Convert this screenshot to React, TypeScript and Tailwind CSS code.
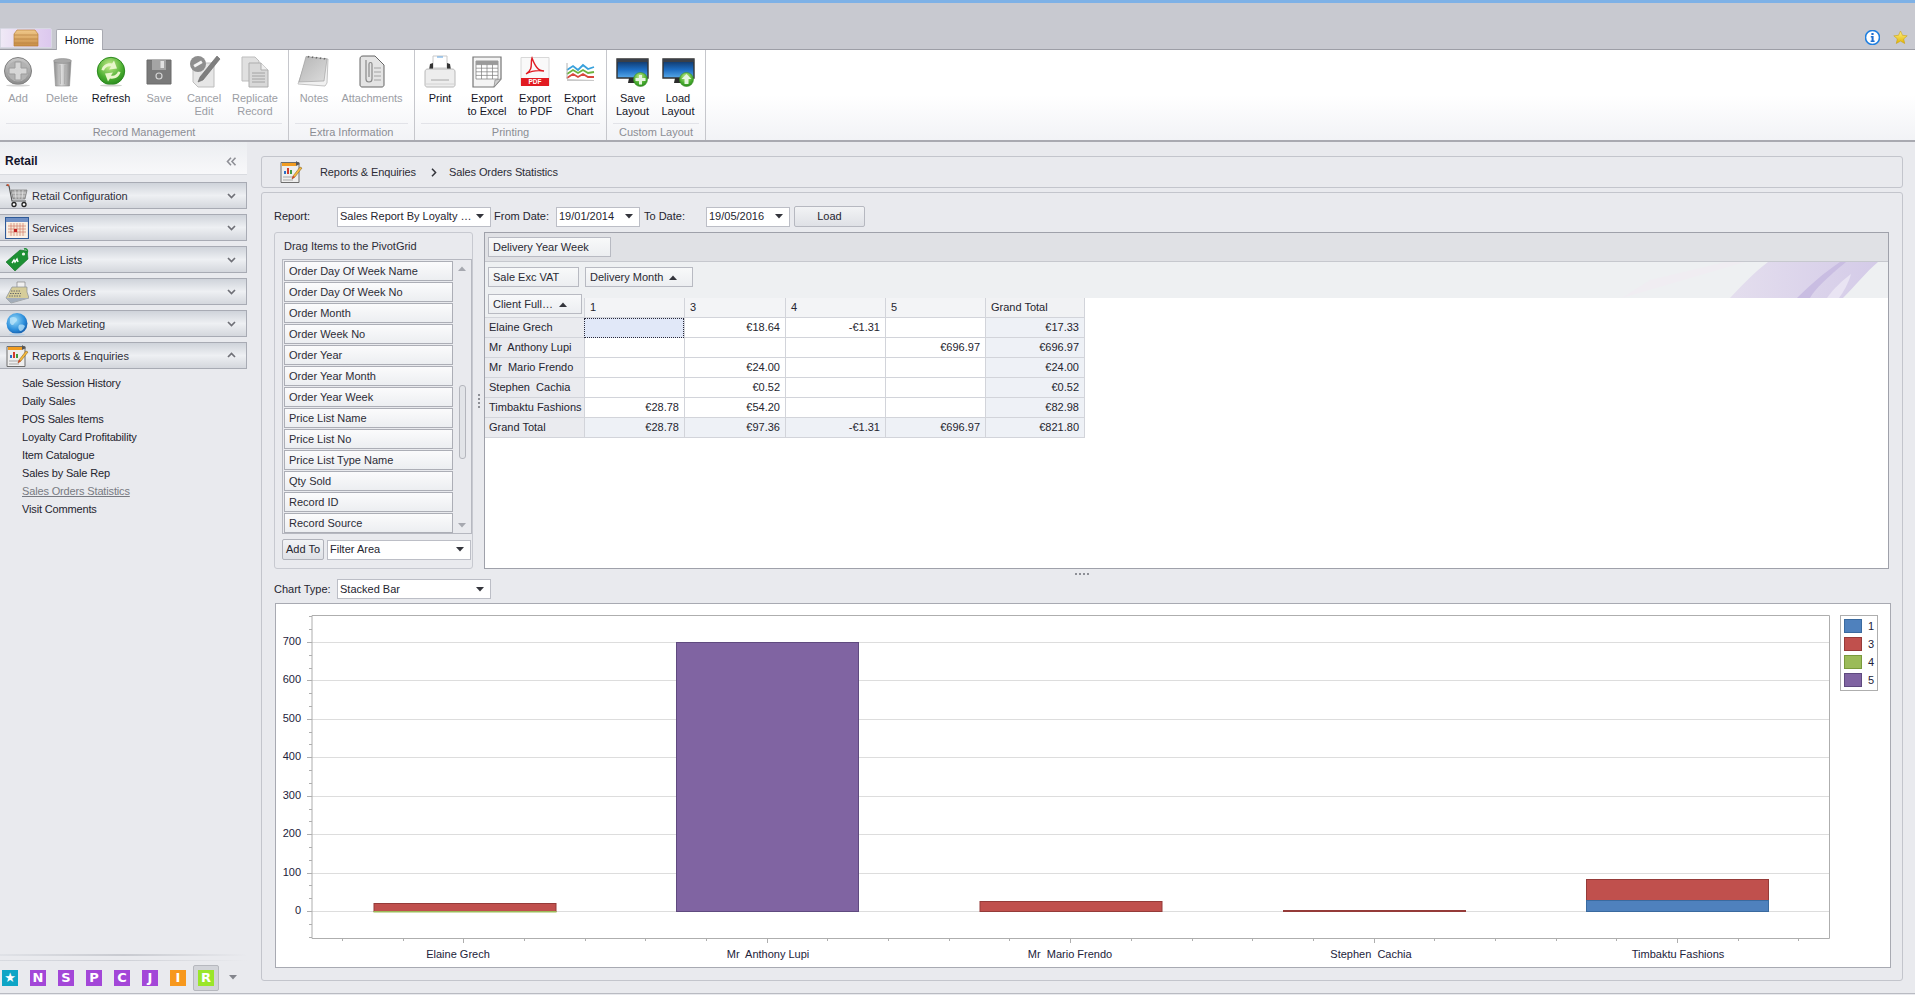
import React from "react";

const Defs = () => (
  <svg width="0" height="0" className="absolute">
    <defs>
      <linearGradient id="gGrey" x1="0" y1="0" x2="0" y2="1"><stop offset="0" stopColor="#c9c9c9" /><stop offset="1" stopColor="#8b8b8b" /></linearGradient>
      <linearGradient id="gPad" x1="0" y1="0" x2="1" y2="1"><stop offset="0" stopColor="#b5b5b5" /><stop offset="1" stopColor="#dcdcdc" /></linearGradient>
      <linearGradient id="gCyl" x1="0" y1="0" x2="1" y2="0"><stop offset="0" stopColor="#8d8d8d" /><stop offset=".45" stopColor="#dcdcdc" /><stop offset="1" stopColor="#858585" /></linearGradient>
      <radialGradient id="gGreen" cx=".45" cy=".3" r=".8"><stop offset="0" stopColor="#c6ec8c" /><stop offset=".6" stopColor="#49ad2f" /><stop offset="1" stopColor="#1d7d18" /></radialGradient>
      <linearGradient id="gScreen" x1="0" y1="0" x2="0" y2="1"><stop offset="0" stopColor="#0f2c55" /><stop offset=".55" stopColor="#1c6bc0" /><stop offset="1" stopColor="#57a9ea" /></linearGradient>
      <radialGradient id="gGlobe" cx=".4" cy=".35" r=".75"><stop offset="0" stopColor="#9bdcf8" /><stop offset=".6" stopColor="#2d8fdc" /><stop offset="1" stopColor="#0e4f9e" /></radialGradient>
      <linearGradient id="gWood" x1="0" y1="0" x2="0" y2="1"><stop offset="0" stopColor="#f0c98b" /><stop offset="1" stopColor="#c98d45" /></linearGradient>
      <linearGradient id="gStar" x1="0" y1="0" x2="0" y2="1"><stop offset="0" stopColor="#fff38a" /><stop offset="1" stopColor="#e2b400" /></linearGradient>
      <linearGradient id="gSwoosh" x1="0" y1="0" x2="1" y2="0"><stop offset="0" stopColor="#e4deee" /><stop offset="1" stopColor="#d4cbe8" /></linearGradient>
    </defs>
  </svg>
);

const AddIcon = () => (
  <svg width="32" height="33" viewBox="0 0 32 33">
    <circle cx="16" cy="16" r="13.5" fill="url(#gGrey)" stroke="#7f7f7f" />
    <circle cx="16" cy="16" r="10.5" fill="#b2b2b2" />
    <path d="M13 7h6v6h6v6h-6v6h-6v-6H7v-6h6z" fill="#d6d6d6" stroke="#9c9c9c" />
    <ellipse cx="16" cy="30.5" rx="12" ry="1" fill="#d5d5d5" />
  </svg>
);
const TrashIcon = () => (
  <svg width="32" height="33" viewBox="0 0 32 33">
    <path d="M8 7h17l-1.5 24h-14z" fill="url(#gCyl)" stroke="#8d8d8d" strokeWidth=".6" />
    <ellipse cx="16.5" cy="6" rx="9" ry="2.4" fill="#a8a8a8" stroke="#8a8a8a" strokeWidth=".6" />
    <path d="M14 10l.4 19M19 10l-.4 19" stroke="#9a9a9a" strokeWidth=".6" />
  </svg>
);
const RefreshIcon = () => (
  <svg width="32" height="33" viewBox="0 0 32 33">
    <circle cx="16" cy="16" r="13.7" fill="url(#gGreen)" stroke="#2c8a20" />
    <path d="M6.5 15c1-5 6-7.5 10.5-6.5l2-3 3 8-8 1 2-3c-3-.8-6 1-7 4z" fill="#e8f6cc" />
    <path d="M25.5 17c-1 5-6 7.5-10.5 6.5l-2 3-3-8 8-1-2 3c3 .8 6-1 7-4z" fill="#e8f6cc" />
    <ellipse cx="16" cy="30.5" rx="11" ry="1" fill="#cfd3cc" />
  </svg>
);
const SaveIcon = () => (
  <svg width="32" height="33" viewBox="0 0 32 33">
    <path d="M4 5h24v24H4z" fill="#7a7a7a" stroke="#6a6a6a" />
    <path d="M9 5h14v10H9z" fill="#a4a4a4" />
    <path d="M17.5 6h3.5v7h-3.5z" fill="#e2e2e2" />
    <circle cx="16" cy="21" r="3" fill="none" stroke="#d4d4d4" strokeWidth="1.2" />
  </svg>
);
const CancelEditIcon = () => (
  <svg width="34" height="33" viewBox="0 0 34 33">
    <path d="M6 8h21v24H11l-5-5z" fill="#e6e6e6" stroke="#bdbdbd" />
    <circle cx="11" cy="9" r="8" fill="#8e8e8e" />
    <path d="M6.5 9h9" stroke="#f3f3f3" strokeWidth="3" transform="rotate(-30 11 9)" />
    <path d="M30 1l3 3-17 21-5 2 2-5z" fill="#7f7f7f" stroke="#666" strokeWidth=".6" />
  </svg>
);
const ReplicateIcon = () => (
  <svg width="32" height="33" viewBox="0 0 32 33">
    <path d="M3 2h13l4 4v20H3z" fill="#e0e0e0" stroke="#bdbdbd" />
    <path d="M10 8h12l7 7v17H10z" fill="#d8d8d8" stroke="#adadad" />
    <path d="M22 8v7h7" fill="#eeeeee" stroke="#adadad" />
    <path d="M13 18h13M13 21h13M13 24h13M13 27h13" stroke="#989898" strokeWidth=".8" />
  </svg>
);
const NotesIcon = () => (
  <svg width="34" height="33" viewBox="0 0 34 33">
    <path d="M10 2l21 2-1 24-2 3-27-2z" fill="#f1f1f1" stroke="#c4c4c4" />
    <path d="M9 1.5l21 2.5-3 22-25 1z" fill="url(#gPad)" stroke="#9b9b9b" strokeWidth=".6" />
    <path d="M11 2.5l1-1.5M15 3l1-1.5M19 3.5l1-1.5M23 4l1-1.5M27 4.5l1-1.5" stroke="#666" strokeWidth="1.3" />
  </svg>
);
const AttachIcon = () => (
  <svg width="32" height="33" viewBox="0 0 32 33">
    <path d="M4 4c0-2 1-3 3-3h12l9 9v20c0 1-1 2-2 2H6c-1 0-2-1-2-2z" fill="#e4e4e4" stroke="#555" strokeWidth=".9" />
    <path d="M10 5v19c0 4 6 4 6 0V9c0-2-3-2-3 0v13" fill="none" stroke="#8a8a8a" strokeWidth="1.2" />
    <path d="M18 13h7M18 17h7M18 21h7M18 25h7" stroke="#8a8a8a" strokeWidth=".7" />
  </svg>
);
const PrintIcon = () => (
  <svg width="34" height="33" viewBox="0 0 34 33">
    <path d="M10 1h14v12H10z" fill="#fff" stroke="#c8c8c8" />
    <path d="M14 2h6" stroke="#5aa0e0" strokeWidth="1" />
    <path d="M7 9l3-1v6h14V8l3 1 1 6H6z" fill="#333" />
    <path d="M2 17c0-2 1-3 3-3h24c2 0 3 1 3 3v13c0 1-1 2-2 2H4c-1 0-2-1-2-2z" fill="#ededed" stroke="#b8b8b8" />
    <path d="M8 25h18" stroke="#a6a6a6" strokeWidth="1" />
    <path d="M2 29h30" stroke="#d2d2d2" />
  </svg>
);
const ExcelIcon = () => (
  <svg width="32" height="33" viewBox="0 0 32 33">
    <path d="M2 2h28v22l-7 8H2z" fill="#f4f4f4" stroke="#767676" strokeWidth="1.2" />
    <path d="M5 6h22v18H5z" fill="#fff" stroke="#777" strokeWidth=".7" />
    <path d="M5 9.6h22M5 13.2h22M5 16.8h22M5 20.4h22M10.5 6v18M16 6v18M21.5 6v18" stroke="#7d7d7d" strokeWidth=".7" />
    <path d="M5 6h22v3.6H5z" fill="#9a9a9a" />
    <path d="M23 32l1-7 6-1z" fill="#cfcfcf" stroke="#888" strokeWidth=".7" />
  </svg>
);
const PdfIcon = () => (
  <svg width="32" height="33" viewBox="0 0 32 33">
    <path d="M2 2.5h28v28H2z" fill="#f9f9f9" stroke="#d8d8d8" />
    <path d="M2 23h28v8H2z" fill="#e11b22" />
    <path d="M13 3c-2 5 2 11-6 16 5-3 11-4 18-3-6 0-9-5-12-13z" fill="none" stroke="#e11b22" strokeWidth="1.4" />
    <text x="16" y="29.4" textAnchor="middle" fontSize="6.5" fontWeight="700" fill="#fff" fontFamily="Liberation Sans">PDF</text>
  </svg>
);
const ChartIcon = () => (
  <svg width="32" height="33" viewBox="0 0 32 33">
    <path d="M3 24l27 1v1H3z" fill="#c8c8c8" />
    <path d="M3 15l6-4 5 4 5-5 5 4 6-2" fill="none" stroke="#38a1dc" strokeWidth="1.8" />
    <path d="M3 19l6-4 5 3 5-3 5 3 6-1" fill="none" stroke="#6cb33f" strokeWidth="1.8" />
    <path d="M3 23l6-4 5 3 5-3 5 3 6 0" fill="none" stroke="#d9473d" strokeWidth="1.8" />
    <path d="M3 8v16" stroke="#b4b4b4" />
  </svg>
);
const MonitorIcon = ({ up }: { up?: boolean }) => (
  <svg width="33" height="33" viewBox="0 0 33 33">
    <path d="M1 4h31v19H1z" fill="url(#gScreen)" stroke="#333" strokeWidth="1.4" />
    <path d="M1 4h31v3H1z" fill="#3a3f48" />
    <path d="M13 23h7l1 5h-9z" fill="#2c2c2c" />
    <circle cx="24.5" cy="24.5" r="7" fill="url(#gGreen)" stroke="#3a8d27" strokeWidth=".6" />
    {up ? <path d="M24.5 19l5 5h-3v5h-4v-5h-3z" fill="#e6f5e0" /> : <path d="M23 20h3v3h3.5v3H26v3.5h-3V26h-3.5v-3H23z" fill="#e6f5e0" />}
  </svg>
);

const CartIcon = () => (
  <svg width="24" height="24" viewBox="0 0 24 24">
    <path d="M1 1l3 1 3 15h14" fill="none" stroke="#555" strokeWidth="1.2" />
    <path d="M2 .5l2 1" stroke="#d4502a" strokeWidth="1.4" />
    <path d="M6 6h16l-2 9H8z" fill="#a9a9a9" stroke="#727272" strokeWidth=".7" />
    <path d="M10 6l1 9M14 6v9M18 6l-1 9M7 9h14M8 12h12" stroke="#e6e6e6" strokeWidth=".7" />
    <circle cx="9" cy="20.5" r="2" fill="#fff" stroke="#222" strokeWidth="1.3" />
    <circle cx="19" cy="20.5" r="2" fill="#fff" stroke="#222" strokeWidth="1.3" />
  </svg>
);
const CalendarIcon = () => (
  <svg width="24" height="24" viewBox="0 0 24 24">
    <path d="M.5 1.5h23v21H.5z" fill="#fdf2e8" stroke="#2f5a98" strokeWidth="1.2" />
    <path d="M1 2h22v4H1z" fill="#6f8fc4" />
    <path d="M3 7h18v13H3z" fill="#f7ead9" />
    <path d="M3 10h18M3 13h18M3 16h18M6 7v13M9 7v13M12 7v13M15 7v13M18 7v13" stroke="#cf6d5c" strokeWidth=".6" />
    <path d="M9 13h3v3H9z" fill="#c32222" />
  </svg>
);
const TagIcon = () => (
  <svg width="24" height="24" viewBox="0 0 24 24">
    <path d="M15 2l7 1 1 8-13 12L1 14z" fill="#1c9033" stroke="#0d6c22" strokeWidth=".6" />
    <circle cx="18.5" cy="6" r="1.6" fill="#eaf6ea" />
    <path d="M19 1c3-1 5 2 2 5" fill="none" stroke="#1c9033" strokeWidth="1.4" />
    <path d="M7 15l2-3 1 2 2-3 1 3" fill="none" stroke="#fff" strokeWidth="1.4" />
  </svg>
);
const RegisterIcon = () => (
  <svg width="24" height="24" viewBox="0 0 24 24">
    <path d="M12 2h8v6h-8z" fill="#f0f0f0" stroke="#777" strokeWidth=".6" />
    <path d="M7 7h15v5l2 6-18 5L1 18z" fill="#d6cd9a" stroke="#8a8f96" strokeWidth=".7" />
    <path d="M1 18h23l-18 5z" fill="#a3adba" />
    <path d="M6 11h10M5 13.5h11M4 16h12" stroke="#6a6a6a" strokeWidth="1" strokeDasharray="1.5 1" />
  </svg>
);
const GlobeIcon = () => (
  <svg width="24" height="24" viewBox="0 0 24 24">
    <circle cx="12" cy="11.5" r="10.5" fill="url(#gGlobe)" />
    <path d="M5 6c3-2 6-1 7 1s-2 3-3 5-3 1-4-1zM14 13c3-1 5 0 6 1-1 3-3 5-5 5-2-2-2-4-1-6z" fill="#bfe6fa" opacity=".75" />
    <ellipse cx="12" cy="22.5" rx="8" ry="1.2" fill="#b6cfe6" />
  </svg>
);
const ReportIcon = () => (
  <svg width="24" height="24" viewBox="0 0 24 24">
    <path d="M2 2.5h18v20H2z" fill="#eeeeee" stroke="#6d6d6d" />
    <path d="M3 3h14v3H3z" fill="#f19c21" />
    <path d="M17 1l4 3-4 2z" fill="#555" />
    <path d="M5 14h2v-3H5z" fill="#2d6fc6" />
    <path d="M8 14h2V8H8z" fill="#d23d2d" />
    <path d="M11 14h2v-4h-2z" fill="#3f9b3f" />
    <path d="M4 17h10M4 20h10" stroke="#a8a8a8" />
    <path d="M23 8l-7 9-3 2 1-3 7-9z" fill="#f6b93b" stroke="#7a5b1b" strokeWidth=".5" />
    <path d="M13 19l1-3 2 1z" fill="#d3372a" />
  </svg>
);

type RI = { label: string[]; w: number; icon: React.ReactNode; on?: boolean };

const RibbonItem = ({ label, w, icon, on }: RI) => (
  <div style={{ width: w }} className="flex flex-col items-center shrink-0">
    <div className="h-[35px] mt-[4px] flex items-center justify-center">{icon}</div>
    <div className={`mt-[3px] text-center leading-[13px] ${on ? "text-[#14141f]" : "text-[#9b9da4]"}`}>
      {label.map((l) => (
        <div key={l} className="whitespace-nowrap">{l}</div>
      ))}
    </div>
  </div>
);

const RibbonGroup = ({ title, w, items }: { title: string; w: number; items: RI[] }) => (
  <div style={{ width: w }} className="h-full shrink-0 border-r border-[#c6c7cc] flex flex-col">
    <div className="flex h-[73px]">
      {items.map((i) => (
        <RibbonItem key={i.label.join()} {...i} />
      ))}
    </div>
    <div className="mx-[6px] h-px bg-[#e2e3e8]" />
    <div className="text-center text-[#8b8d94] leading-[16px]">{title}</div>
  </div>
);

const navItems: [string, React.ReactNode, boolean][] = [
  ["Retail Configuration", <CartIcon />, false],
  ["Services", <CalendarIcon />, false],
  ["Price Lists", <TagIcon />, false],
  ["Sales Orders", <RegisterIcon />, false],
  ["Web Marketing", <GlobeIcon />, false],
  ["Reports & Enquiries", <ReportIcon />, true],
];

const subItems = ["Sale Session History", "Daily Sales", "POS Sales Items", "Loyalty Card Profitability", "Item Catalogue", "Sales by Sale Rep", "Sales Orders Statistics", "Visit Comments"];

const Chevron = ({ up }: { up?: boolean }) => (
  <svg width="9" height="7" viewBox="0 0 9 7">
    <path d={up ? "M1 5l3.5-3.5L8 5" : "M1 2l3.5 3.5L8 2"} fill="none" stroke="#6f7077" strokeWidth="1.7" />
  </svg>
);

const Arrow = ({ up, color = "#33343b" }: { up?: boolean; color?: string }) => (
  <svg width="8" height="5" viewBox="0 0 8 5" className="shrink-0">
    <path d={up ? "M0 5l4-4.5L8 5z" : "M0 0l4 4.5L8 0z"} fill={color} />
  </svg>
);

const Combo = ({ text, w }: { text: string; w: string }) => (
  <div className={`${w} h-[20px] shrink-0 bg-white border border-[#bcbec6] flex items-center justify-between pl-[2px] pr-[6px]`}>
    <span className="whitespace-nowrap">{text}</span>
    <Arrow />
  </div>
);

const FieldBtn = ({ text, w, sort }: { text: string; w: string; sort?: boolean }) => (
  <div className={`${w} h-[20px] shrink-0 border border-[#b8bac2] bg-gradient-to-b from-[#f8f9fa] to-[#eceef1] flex items-center gap-[6px] pl-[4px] text-[#2a2a33]`}>
    <span className="whitespace-nowrap">{text}</span>
    {sort && <Arrow up />}
  </div>
);

const fields = ["Order Day Of Week Name", "Order Day Of Week No", "Order Month", "Order Week No", "Order Year", "Order Year Month", "Order Year Week", "Price List Name", "Price List No", "Price List Type Name", "Qty Sold", "Record ID", "Record Source"];

const rows: [string, string, string, string, string, string][] = [
  ["Elaine Grech", "", "€18.64", "-€1.31", "", "€17.33"],
  ["Mr  Anthony Lupi", "", "", "", "€696.97", "€696.97"],
  ["Mr  Mario Frendo", "", "€24.00", "", "", "€24.00"],
  ["Stephen  Cachia", "", "€0.52", "", "", "€0.52"],
  ["Timbaktu Fashions", "€28.78", "€54.20", "", "", "€82.98"],
  ["Grand Total", "€28.78", "€97.36", "-€1.31", "€696.97", "€821.80"],
];

const Dots = ({ v }: { v?: boolean }) => (
  <div className={`${v ? "w-[2px] h-[14px] border-l-2" : "h-[2px] w-[14px] border-t-2"} border-dotted border-[#8d8f96]`} />
);

const tiles: [string, string][] = [["★", "#0ea5c6"], ["N", "#a347d8"], ["S", "#a347d8"], ["P", "#a347d8"], ["C", "#a347d8"], ["J", "#a347d8"], ["I", "#f7981d"], ["R", "#9ae62a"]];

const C = { blue: ["#4f81bd", "#3a6a9f"], red: ["#c0504d", "#953b39"], green: ["#9bbb59", "#7a9a3c"], purple: ["#8064a2", "#5f4a7f"] };

const Chart = () => {
  const grid = [0, 100, 200, 300, 400, 500, 600, 700];
  const yOf = (v: number) => 910 - v * 0.3843;
  const yTicks: { y: number; major: boolean }[] = [];
  for (let k = -2; k <= 23; k++) yTicks.push({ y: 910 - k * 12.81, major: k % 3 === 0 });
  const xTicks: { x: number; major: boolean }[] = [];
  for (let k = 0; k < 25; k++) xTicks.push({ x: 342 + k * 60.68, major: k % 5 === 2 });
  const cats: [string, number][] = [["Elaine Grech", 458], ["Mr  Anthony Lupi", 768], ["Mr  Mario Frendo", 1070], ["Stephen  Cachia", 1371], ["Timbaktu Fashions", 1678]];
  const bars: [number, number, number, string[]][] = [
    [373.5, 902, 8, C.red],
    [676, 641, 269, C.purple],
    [979.5, 900, 10, C.red],
    [1283, 909, 1, C.red],
    [1586, 878, 21, C.red],
    [1586, 899, 11, C.blue],
  ];
  const legend: [string, string[]][] = [["1", C.blue], ["3", C.red], ["4", C.green], ["5", C.purple]];
  return (
    <svg width="1614" height="363" viewBox="276 603 1614 363" className="block" fontFamily="Liberation Sans" fontSize="11" fill="#22223a">
      {grid.map((g) => (
        <g key={g}>
          <path d={`M312 ${Math.round(yOf(g)) + 0.5}H1829`} stroke="#dddddd" />
          <text x="301" y={yOf(g) + 3} textAnchor="end">{g}</text>
        </g>
      ))}
      {bars.map(([x, y, h, c], i) => (
        <rect key={i} x={x + 0.5} y={y + 0.5} width="182" height={h} fill={c[0]} stroke={c[1]} strokeWidth="1" />
      ))}
      <rect x="373.5" y="910" width="183" height="1.5" fill={C.green[0]} />
      <path d="M312 614.5H1829.5V937.5H312z" fill="none" stroke="#aeaeae" />
      {yTicks.map((t, i) => (
        <path key={i} d={`M${t.major ? 307 : 309} ${Math.round(t.y) + 0.5}H312`} stroke="#aeaeae" />
      ))}
      {xTicks.map((t, i) => (
        <path key={i} d={`M${Math.round(t.x) + 0.5} 937V${t.major ? 942 : 940}`} stroke="#aeaeae" />
      ))}
      {cats.map(([c, x]) => (
        <text key={c} x={x} y="956.5" textAnchor="middle" style={{ whiteSpace: "pre" }}>{c}</text>
      ))}
      <rect x="1840.5" y="614.5" width="37" height="75" fill="#fff" stroke="#aeaeae" />
      {legend.map(([l, c], i) => (
        <g key={l}>
          <rect x="1844.5" y={618.5 + i * 18} width="17" height="13" fill={c[0]} stroke={c[1]} />
          <text x="1868" y={629 + i * 18}>{l}</text>
        </g>
      ))}
    </svg>
  );
};

export default function App() {
  return (
    <div className="w-[1915px] h-[995px] overflow-hidden flex flex-col bg-[#e9eaee] text-[11px] leading-[13px] text-[#25252f] font-['Liberation_Sans',sans-serif]">
      <Defs />
      <div className="h-[3px] shrink-0 bg-[#7eb1e6]" />
      {/* title strip */}
      <div className="h-[47px] shrink-0 bg-[#c8c9d0] border-b border-[#9d9ea6] flex items-end relative">
        <div className="w-[52px] h-[20px] mb-[1px] border border-[#d8d8e4] bg-gradient-to-r from-[#efe9f6] via-[#e6d6f1] to-[#dcc8ee] flex items-center justify-center rounded-tr-[2px]">
          <svg width="28" height="18" viewBox="0 0 28 18">
            <path d="M2 5l3-4h18l3 4v12H2z" fill="url(#gWood)" stroke="#b98339" strokeWidth=".7" />
            <path d="M2 6h24M2 10h24M2 14h24" stroke="#b4803f" strokeWidth=".7" />
          </svg>
        </div>
        <div className="ml-[4px] w-[47px] h-[21px] -mb-px bg-white border border-b-0 border-[#a9aab2] rounded-t-[2px] flex items-center justify-center text-[#14141f]">Home</div>
        <div className="ml-auto flex items-center gap-[13px] mr-[7px] mb-[4px]">
          <svg width="15" height="15" viewBox="0 0 15 15">
            <circle cx="7.5" cy="7.5" r="7" fill="#fff" stroke="#1f7fe0" strokeWidth="1.6" />
            <path d="M6.4 3h2.2v2H6.4zM5.8 6h2.8v4.6h1V12H5.6v-1.4h1V7.4h-.8z" fill="#1f6fd0" />
          </svg>
          <svg width="15" height="15" viewBox="0 0 15 15">
            <path d="M7.5 1l2 4.3 4.7.5-3.5 3.1 1 4.6-4.2-2.4-4.2 2.4 1-4.6L.8 5.8l4.7-.5z" fill="url(#gStar)" stroke="#c89b00" strokeWidth=".5" />
          </svg>
        </div>
      </div>
      {/* ribbon */}
      <div className="h-[92px] shrink-0 flex border-b-2 border-[#a9aab1] bg-gradient-to-b from-white via-white to-[#f2f3f6]">
        <RibbonGroup title="Record Management" w={289} items={[
          { label: ["Add"], w: 36, icon: <AddIcon /> },
          { label: ["Delete"], w: 52, icon: <TrashIcon /> },
          { label: ["Refresh"], w: 46, icon: <RefreshIcon />, on: true },
          { label: ["Save"], w: 50, icon: <SaveIcon /> },
          { label: ["Cancel", "Edit"], w: 40, icon: <CancelEditIcon /> },
          { label: ["Replicate", "Record"], w: 62, icon: <ReplicateIcon /> },
        ]} />
        <RibbonGroup title="Extra Information" w={126} items={[
          { label: ["Notes"], w: 50, icon: <NotesIcon /> },
          { label: ["Attachments"], w: 66, icon: <AttachIcon /> },
        ]} />
        <RibbonGroup title="Printing" w={192} items={[
          { label: ["Print"], w: 50, icon: <PrintIcon />, on: true },
          { label: ["Export", "to Excel"], w: 44, icon: <ExcelIcon />, on: true },
          { label: ["Export", "to PDF"], w: 52, icon: <PdfIcon />, on: true },
          { label: ["Export", "Chart"], w: 38, icon: <ChartIcon />, on: true },
        ]} />
        <RibbonGroup title="Custom Layout" w={99} items={[
          { label: ["Save", "Layout"], w: 51, icon: <MonitorIcon />, on: true },
          { label: ["Load", "Layout"], w: 40, icon: <MonitorIcon up />, on: true },
        ]} />
      </div>
      {/* body */}
      <div className="flex-1 min-h-0 flex border-b border-[#b9bbc2] mb-[1px]">
        {/* sidebar */}
        <div className="w-[247px] shrink-0 flex flex-col">
          <div className="h-[33px] shrink-0 flex items-center justify-between pt-[6px] pl-[5px] pr-[10px] border-b border-[#d9dbe0] bg-gradient-to-b from-[#eceef1] to-[#f8f8fa]">
            <span className="font-bold text-[12px] text-[#14142a]">Retail</span>
            <svg width="11" height="9" viewBox="0 0 11 9">
              <path d="M5 .7L1.5 4.5 5 8.3M9.5 .7L6 4.5l3.5 3.8" fill="none" stroke="#8f9097" strokeWidth="1.6" />
            </svg>
          </div>
          <div className="mt-[7px] flex flex-col gap-[5px]">
            {navItems.map(([t, ic, up]) => (
              <div key={t} className="h-[27px] relative border border-l-0 border-[#a8abb4] bg-gradient-to-b from-[#cfd3da] via-[#eef0f3] to-[#d4d7dd] flex items-center pl-[32px] pr-[10px] justify-between text-[#2e2e3a]">
                <span className="absolute left-[5px] top-px">{ic}</span>
                <span className="tracking-[-0.05px] pt-[1px]">{t}</span>
                <Chevron up={up} />
              </div>
            ))}
          </div>
          <div className="mt-[5px] flex flex-col tracking-[-0.15px]">
            {subItems.map((s) => (
              <div key={s} className={`h-[18px] flex items-center pl-[22px] ${s === "Sales Orders Statistics" ? "text-[#787a82] underline" : "text-[#25252f]"}`}>{s}</div>
            ))}
          </div>
          <div className="mt-auto h-[2px] bg-gradient-to-r from-[#e0e2e7] via-[#c8cad0] to-[#e9eaee]" />
          <div className="mt-[4px] h-px bg-gradient-to-r from-[#d8dae0] via-[#cfd1d7] to-[#e9eaee]" />
          <div className="h-[32px] shrink-0 flex items-center pl-[2px] pt-[1px]">
            {tiles.map(([t, c], i) => (
              <div key={t} className={i === 7 ? "w-[26px] h-[26px] -ml-[5px] flex items-center justify-center bg-[#d2d4d9] border border-[#b6b8be] rounded-[2px]" : "w-[16px] h-[16px] mr-[12px] flex"}>
                <div style={{ background: c }} className="w-[16px] h-[16px] flex items-center justify-center text-white font-bold text-[13px] leading-none font-['DejaVu_Sans',sans-serif]">{t}</div>
              </div>
            ))}
            <div className="ml-[10px]"><Arrow color="#83858c" /></div>
          </div>
        </div>
        {/* main */}
        <div className="w-[1642px] ml-[14px] pt-[14px] shrink-0 flex flex-col">
          <div className="h-[32px] shrink-0 border border-[#c3c5cc] rounded-[3px] flex items-center pl-[17px] text-[#2c2c36] tracking-[-0.1px]">
            <ReportIcon />
            <span className="ml-[17px]">Reports &amp; Enquiries</span>
            <svg width="6" height="9" viewBox="0 0 6 9" className="ml-[15px]">
              <path d="M1 .7l3.6 3.8L1 8.3" fill="none" stroke="#33343b" strokeWidth="1.5" />
            </svg>
            <span className="ml-[12px]">Sales Orders Statistics</span>
          </div>
          <div className="mt-[4px] h-[789px] shrink-0 border border-[#c3c5cc] rounded-[3px] pt-[13px] pl-[12px] pr-[13px] flex flex-col">
            <div className="flex items-center h-[21px] shrink-0">
              <span className="w-[63px]">Report:</span>
              <Combo text="Sales Report By Loyalty …" w="w-[154px]" />
              <span className="ml-[3px] w-[62px]">From Date:</span>
              <Combo text="19/01/2014" w="w-[84px]" />
              <span className="ml-[4px] w-[62px]">To Date:</span>
              <Combo text="19/05/2016" w="w-[84px]" />
              <div className="ml-[4px] w-[71px] h-[21px] rounded-[2px] border border-[#b6b8c0] bg-gradient-to-b from-[#f2f3f5] to-[#dfe1e6] flex items-center justify-center">Load</div>
            </div>
            <div className="mt-[5px] h-[337px] shrink-0 flex">
              {/* field list */}
              <div className="w-[199px] shrink-0 border border-[#c7c9d0] rounded-[3px] pl-[7px] flex flex-col">
                <div className="h-[26px] flex items-center pl-[2px] pt-[1px] text-[#2c2c36]">Drag Items to the PivotGrid</div>
                <div className="h-[275px] shrink-0 border border-[#b6b8c0] flex pt-[1px] pl-px">
                  <div className="w-[169px] shrink-0 flex flex-col gap-px">
                    {fields.map((f) => (
                      <div key={f} className="h-[20px] shrink-0 border border-[#acaeb6] bg-gradient-to-b from-[#fbfbfc] to-[#eceef1] flex items-center pl-[4px] text-[#2c2c36]">{f}</div>
                    ))}
                  </div>
                  <div className="flex-1 flex flex-col items-center pt-[5px] pb-[5px]">
                    <Arrow up color="#a6a8af" />
                    <div className="mt-[114px] w-[7px] h-[74px] rounded-[3px] border border-[#b4b6bd] bg-[#e2e4e8]" />
                    <div className="mt-auto"><Arrow color="#a6a8af" /></div>
                  </div>
                </div>
                <div className="mt-[5px] flex items-center gap-[3px]">
                  <div className="w-[42px] h-[21px] rounded-[2px] border border-[#b0b2ba] bg-gradient-to-b from-[#f2f3f5] to-[#dfe1e6] flex items-center justify-center">Add To</div>
                  <Combo text="Filter Area" w="w-[144px]" />
                </div>
              </div>
              <div className="w-[11px] shrink-0 flex items-center justify-center"><Dots v /></div>
              {/* pivot */}
              <div className="flex-1 min-w-0 bg-white border border-[#9fa1aa] flex flex-col">
                <div className="h-[29px] shrink-0 bg-[#e0e1e5] border-b border-[#c6c8ce] pl-[3px] pt-[4px]">
                  <FieldBtn text="Delivery Year Week" w="w-[123px]" />
                </div>
                <div className="h-[36px] shrink-0 relative bg-[#eef0f2] flex gap-[6px] pl-[3px] pt-[5px]">
                  <svg width="388" height="36" viewBox="0 0 388 36" className="absolute right-0 top-0">
                    <path d="M122 36L245 0h-20L150 18z" fill="#f0edf2" />
                    <path d="M230 36C245 20 255 10 268 0h110c-12 10-24 25-35 36z" fill="url(#gSwoosh)" />
                    <path d="M297 36c12-12 28-26 43-36h6c-12 10-30 25-36 36z" fill="#c9bde2" />
                    <path d="M327 36c6-9 16-18 24-24-2 8-8 19-12 24z" fill="#e9e4f3" />
                  </svg>
                  <FieldBtn text="Sale Exc VAT" w="w-[91px]" />
                  <FieldBtn text="Delivery Month" w="w-[108px]" sort />
                </div>
                <div className="w-[600px] grid grid-cols-[99px_100px_101px_100px_100px_100px] auto-rows-[20px]">
                  <div className="h-[20px] bg-[#eef0f2] pl-[3px] border-b border-[#d2d4da]">
                    <FieldBtn text="Client Full…" w="w-[94px] relative z-10 -mt-[4px]" sort />
                  </div>
                  {["1", "3", "4", "5", "Grand Total"].map((h) => (
                    <div key={h} className={`border-l border-b border-[#d2d4da] flex items-center pl-[5px] ${h === "Grand Total" ? "bg-[#f1f2f4] border-r" : "bg-[#f3f4f6]"}`}>{h}</div>
                  ))}
                  {rows.map((r, ri) =>
                    r.map((c, ci) => {
                      if (ci === 0)
                        return (
                          <div key={ci} className="bg-[#eaebef] border-b border-[#d2d4da] pl-[4px] flex items-center whitespace-pre">{c}</div>
                        );
                      const selected = ri === 0 && ci === 1;
                      const total = ri === 5 || ci === 5;
                      if (selected) return <div key={ci} className="bg-[#e1e8f8] border border-dotted border-[#2a2a3a]" />;
                      return (
                        <div key={ci} className={`flex items-center justify-end pr-[5px] border-l border-b border-[#d2d4da] ${ci === 5 ? "border-r" : ""} ${total ? "bg-[#eef1f6]" : "bg-white"}`}>{c}</div>
                      );
                    })
                  )}
                </div>
              </div>
            </div>
            <div className="h-[10px] shrink-0 flex items-center justify-center"><Dots /></div>
            <div className="h-[20px] shrink-0 flex items-center">
              <span className="w-[63px]">Chart Type:</span>
              <Combo text="Stacked Bar" w="w-[154px]" />
            </div>
            <div className="mt-[4px] w-[1616px] h-[365px] shrink-0 bg-white border border-[#a8aab2] ml-px">
              <Chart />
            </div>
          </div>
        </div>
      </div>
    </div>
  );
}
